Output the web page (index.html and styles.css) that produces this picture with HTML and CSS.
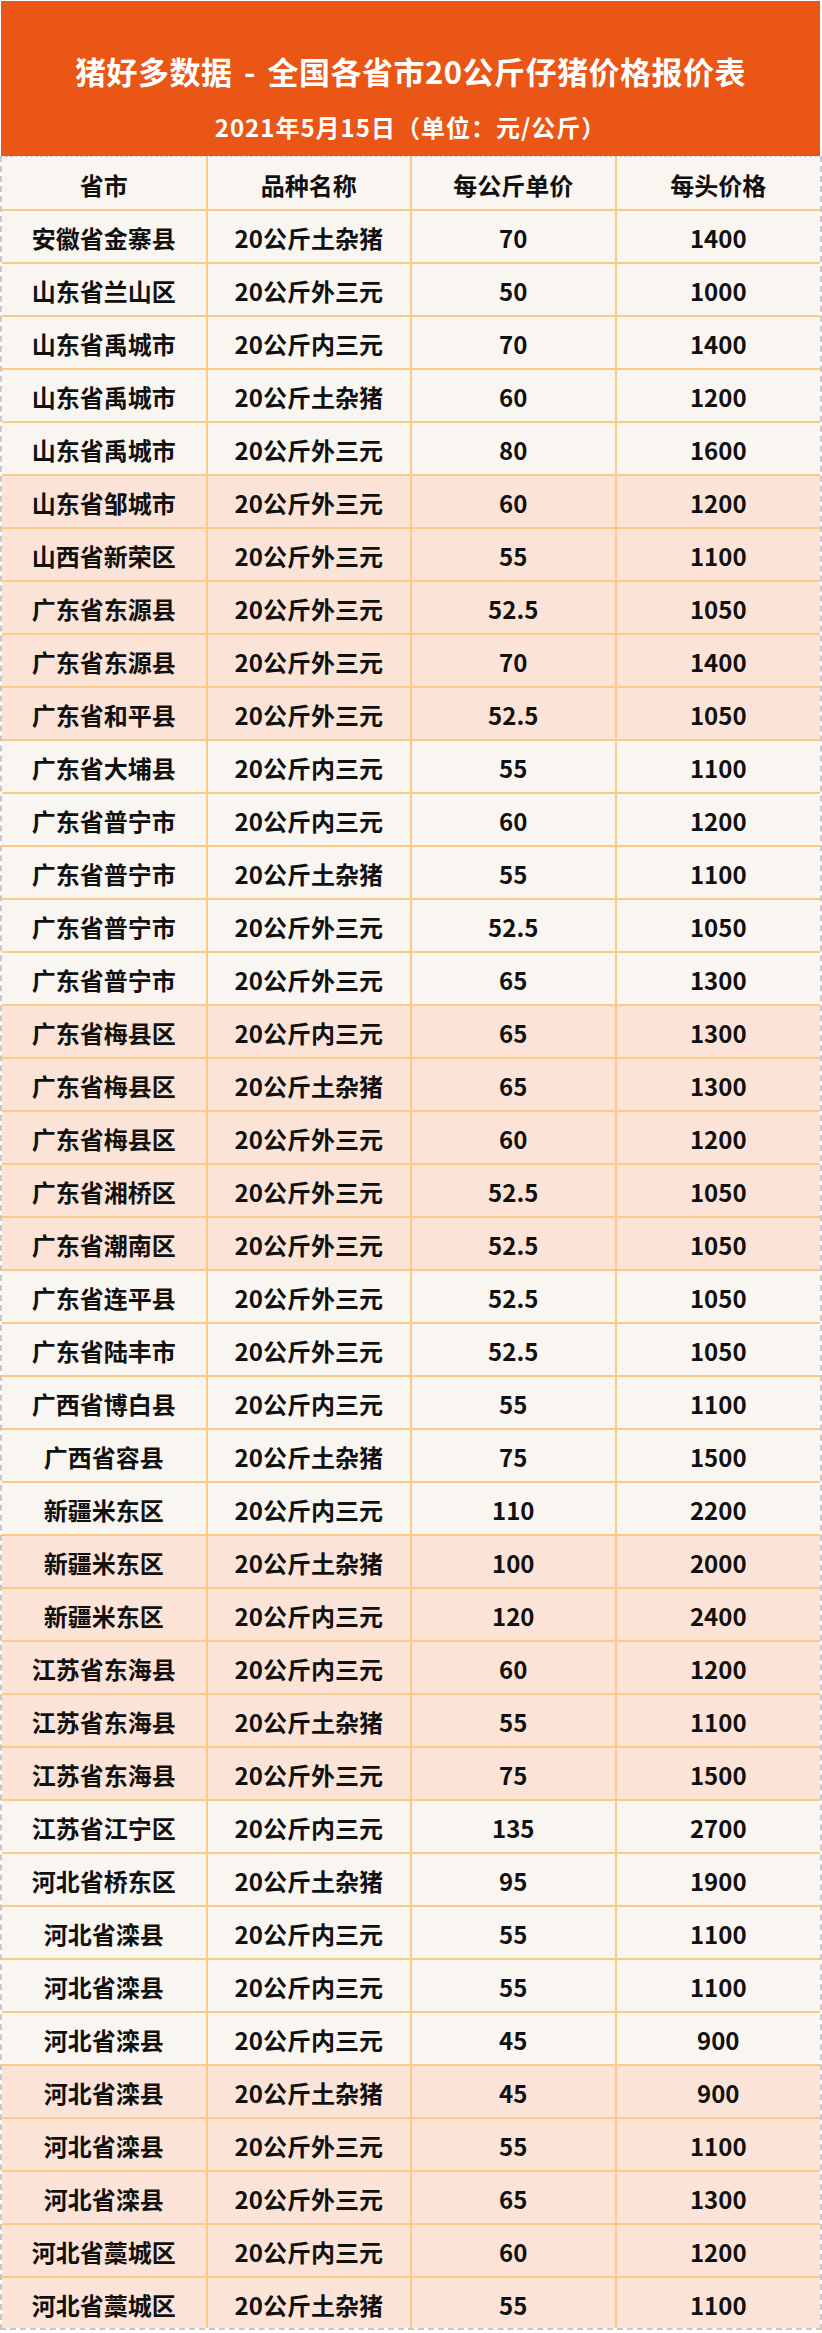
FILE: index.html
```html
<!DOCTYPE html>
<html lang="zh-CN">
<head>
<meta charset="utf-8">
<title>猪好多数据 - 全国各省市20公斤仔猪价格报价表</title>
<link rel="stylesheet" href="styles.css">
</head>
<body>
<div class="page">
  <header class="banner">
    <h1 class="title">猪好多数据 - 全国各省市20公斤仔猪价格报价表</h1>
    <p class="subtitle">2021年5月15日（单位：元/公斤）</p>
  </header>
  <div class="frame">
    <table class="prices">
      <thead>
        <tr><th>省市</th><th>品种名称</th><th>每公斤单价</th><th>每头价格</th></tr>
      </thead>
      <tbody>
        <tr><td>安徽省金寨县</td><td>20公斤土杂猪</td><td>70</td><td>1400</td></tr>
        <tr><td>山东省兰山区</td><td>20公斤外三元</td><td>50</td><td>1000</td></tr>
        <tr><td>山东省禹城市</td><td>20公斤内三元</td><td>70</td><td>1400</td></tr>
        <tr><td>山东省禹城市</td><td>20公斤土杂猪</td><td>60</td><td>1200</td></tr>
        <tr><td>山东省禹城市</td><td>20公斤外三元</td><td>80</td><td>1600</td></tr>
        <tr class="alt"><td>山东省邹城市</td><td>20公斤外三元</td><td>60</td><td>1200</td></tr>
        <tr class="alt"><td>山西省新荣区</td><td>20公斤外三元</td><td>55</td><td>1100</td></tr>
        <tr class="alt"><td>广东省东源县</td><td>20公斤外三元</td><td>52.5</td><td>1050</td></tr>
        <tr class="alt"><td>广东省东源县</td><td>20公斤外三元</td><td>70</td><td>1400</td></tr>
        <tr class="alt"><td>广东省和平县</td><td>20公斤外三元</td><td>52.5</td><td>1050</td></tr>
        <tr><td>广东省大埔县</td><td>20公斤内三元</td><td>55</td><td>1100</td></tr>
        <tr><td>广东省普宁市</td><td>20公斤内三元</td><td>60</td><td>1200</td></tr>
        <tr><td>广东省普宁市</td><td>20公斤土杂猪</td><td>55</td><td>1100</td></tr>
        <tr><td>广东省普宁市</td><td>20公斤外三元</td><td>52.5</td><td>1050</td></tr>
        <tr><td>广东省普宁市</td><td>20公斤外三元</td><td>65</td><td>1300</td></tr>
        <tr class="alt"><td>广东省梅县区</td><td>20公斤内三元</td><td>65</td><td>1300</td></tr>
        <tr class="alt"><td>广东省梅县区</td><td>20公斤土杂猪</td><td>65</td><td>1300</td></tr>
        <tr class="alt"><td>广东省梅县区</td><td>20公斤外三元</td><td>60</td><td>1200</td></tr>
        <tr class="alt"><td>广东省湘桥区</td><td>20公斤外三元</td><td>52.5</td><td>1050</td></tr>
        <tr class="alt"><td>广东省潮南区</td><td>20公斤外三元</td><td>52.5</td><td>1050</td></tr>
        <tr><td>广东省连平县</td><td>20公斤外三元</td><td>52.5</td><td>1050</td></tr>
        <tr><td>广东省陆丰市</td><td>20公斤外三元</td><td>52.5</td><td>1050</td></tr>
        <tr><td>广西省博白县</td><td>20公斤内三元</td><td>55</td><td>1100</td></tr>
        <tr><td>广西省容县</td><td>20公斤土杂猪</td><td>75</td><td>1500</td></tr>
        <tr><td>新疆米东区</td><td>20公斤内三元</td><td>110</td><td>2200</td></tr>
        <tr class="alt"><td>新疆米东区</td><td>20公斤土杂猪</td><td>100</td><td>2000</td></tr>
        <tr class="alt"><td>新疆米东区</td><td>20公斤内三元</td><td>120</td><td>2400</td></tr>
        <tr class="alt"><td>江苏省东海县</td><td>20公斤内三元</td><td>60</td><td>1200</td></tr>
        <tr class="alt"><td>江苏省东海县</td><td>20公斤土杂猪</td><td>55</td><td>1100</td></tr>
        <tr class="alt"><td>江苏省东海县</td><td>20公斤外三元</td><td>75</td><td>1500</td></tr>
        <tr><td>江苏省江宁区</td><td>20公斤内三元</td><td>135</td><td>2700</td></tr>
        <tr><td>河北省桥东区</td><td>20公斤土杂猪</td><td>95</td><td>1900</td></tr>
        <tr><td>河北省滦县</td><td>20公斤内三元</td><td>55</td><td>1100</td></tr>
        <tr><td>河北省滦县</td><td>20公斤内三元</td><td>55</td><td>1100</td></tr>
        <tr><td>河北省滦县</td><td>20公斤内三元</td><td>45</td><td>900</td></tr>
        <tr class="alt"><td>河北省滦县</td><td>20公斤土杂猪</td><td>45</td><td>900</td></tr>
        <tr class="alt"><td>河北省滦县</td><td>20公斤外三元</td><td>55</td><td>1100</td></tr>
        <tr class="alt"><td>河北省滦县</td><td>20公斤外三元</td><td>65</td><td>1300</td></tr>
        <tr class="alt"><td>河北省藁城区</td><td>20公斤内三元</td><td>60</td><td>1200</td></tr>
        <tr class="alt"><td>河北省藁城区</td><td>20公斤土杂猪</td><td>55</td><td>1100</td></tr>
      </tbody>
    </table>
  </div>
</div>
</body>
</html>
```
FILE: styles.css
```css
* { box-sizing: border-box; }

html, body {
  margin: 0;
  padding: 0;
  background: #ffffff;
}

body {
  font-family: "Noto Sans CJK SC", "Noto Sans", sans-serif;
  color: #111111;
}

.page {
  width: 822px;
}

.banner {
  margin: 1px 2px 0 1px;
  height: 155px;
  background: #e95616;
  color: #ffffff;
  text-align: center;
  padding-top: 50px;
}

.title {
  margin: 0;
  font-size: 31px;
  line-height: 40px;
  font-weight: 700;
  letter-spacing: 0.5px;
  word-spacing: 4px;
}

.subtitle {
  margin: 21px 0 0;
  font-size: 24px;
  line-height: 30px;
  font-weight: 700;
  letter-spacing: 1px;
}

.frame {
  border: 2px dashed #c8c8c8;
  border-top-width: 1px;
}

.prices {
  width: 100%;
  border-collapse: collapse;
  table-layout: fixed;
}

.prices th,
.prices td {
  height: 53px;
  padding: 3px 0 0;
  text-align: center;
  vertical-align: middle;
  font-size: 24px;
  font-weight: 700;
  line-height: 1;
  background: #f9f5f1;
  border-right: 2px solid #f9ca88;
  border-bottom: 2px solid #f9ca88;
}

.prices th:last-child,
.prices td:last-child {
  border-right: none;
}

.prices tbody tr:last-child td {
  border-bottom: none;
  height: 51px;
}

.prices tr.alt td {
  background: #fbe4d7;
}
```
